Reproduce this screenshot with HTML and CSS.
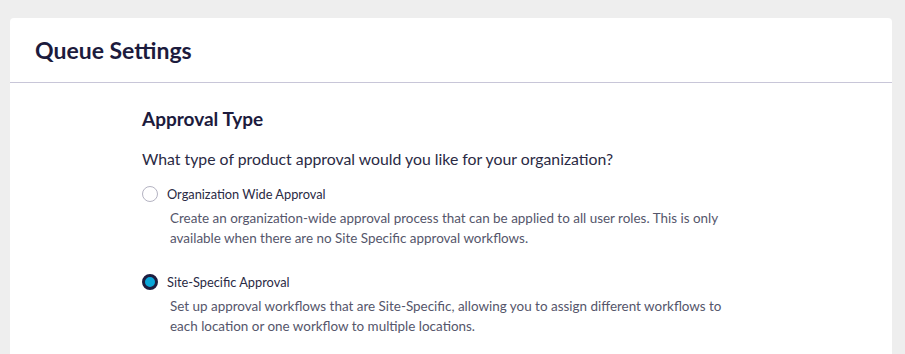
FILE: index.html
```html
<!DOCTYPE html>
<html lang="en">
<head>
    <meta charset="UTF-8">
    <meta name="viewport" content="width=device-width, initial-scale=1.0">
    <title>Queue Settings</title>
    <link rel="stylesheet" href="styles.css">
</head>
<body>

<div class="card">
    <div class="card-header">
        <h1>Queue Settings</h1>
    </div>

    <div class="card-body">
        <h2>Approval Type</h2>
        <p class="question">What type of product approval would you like for your organization?</p>

        <div class="option">
            <label class="option-label">
                <input type="radio" name="approvalType" value="organization">
                <span class="radio"></span>
                <span>Organization Wide Approval</span>
            </label>
            <p class="option-desc">Create an organization-wide approval process that can be applied to all user roles. This is only available when there are no Site Specific approval workflows.</p>
        </div>

        <div class="option">
            <label class="option-label">
                <input type="radio" name="approvalType" value="site" checked>
                <span class="radio"></span>
                <span>Site-Specific Approval</span>
            </label>
            <p class="option-desc">Set up approval workflows that are Site-Specific, allowing you to assign different workflows to each location or one workflow to multiple locations.</p>
        </div>
    </div>
</div>

</body>
</html>
```

FILE: styles.css
```css
body {
    margin: 0;
    padding: 18px 13px 0 10px;
    background-color: #eeeeee;
    font-family: Lato, "Open Sans", sans-serif;
    color: #1c1b3d;
}
.card {
    background-color: #fff;
    border-radius: 4px 4px 0 0;
    min-height: 340px;
}
.card-header {
    height: 64px;
    display: flex;
    align-items: center;
    padding: 0 25px;
    border-bottom: 1px solid #c8c6d8;
}
h1 {
    margin: 0;
    font-size: 23px;
    font-weight: 700;
}
.card-body {
    padding: 24px 0 0 132px;
    width: 590px;
}
h2 {
    margin: 0 0 19px;
    font-size: 19px;
    font-weight: 700;
}
.question {
    margin: 0 0 18px;
    font-size: 15.8px;
    color: #2a2a44;
}
.option {
    margin-bottom: 26px;
}
.option-label {
    display: flex;
    align-items: center;
    gap: 9px;
    font-size: 12.8px;
    color: #2a2a44;
    cursor: pointer;
}
.option-label input {
    display: none;
}
.radio {
    width: 16px;
    height: 16px;
    box-sizing: border-box;
    border: 1px solid #b4b3c2;
    border-radius: 50%;
    background-color: #fff;
}
.option-label input:checked + .radio {
    border: 3px solid #1e1d40;
    background-color: #0aa6d8;
}
.option-desc {
    margin: 6px 0 0 28px;
    font-size: 13.45px;
    line-height: 20px;
    color: #55566b;
}
```
